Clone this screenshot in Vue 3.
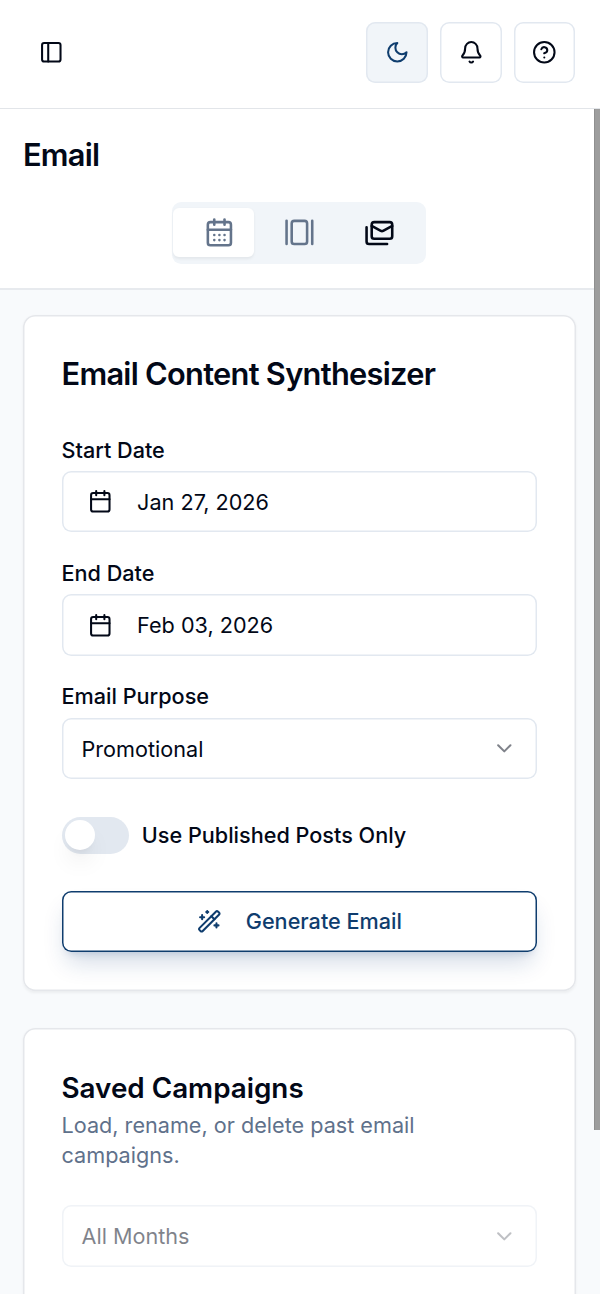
<template>
  <div class="app">
    <header class="topbar">
      <button class="sidebar-toggle" aria-label="Toggle sidebar">
        <svg class="icon" viewBox="0 0 24 24">
          <rect width="18" height="18" x="3" y="3" rx="2" />
          <path d="M9 3v18" />
        </svg>
      </button>
      <div class="actions">
        <button class="action active" aria-label="Toggle theme">
          <svg class="icon" viewBox="0 0 24 24">
            <path d="M12 3a6 6 0 0 0 9 9 9 9 0 1 1-9-9Z" />
          </svg>
        </button>
        <button class="action" aria-label="Notifications">
          <svg class="icon" viewBox="0 0 24 24">
            <path d="M10.268 21a2 2 0 0 0 3.464 0" />
            <path d="M3.262 15.326A1 1 0 0 0 4 17h16a1 1 0 0 0 .74-1.673C19.41 13.956 18 12.499 18 8A6 6 0 0 0 6 8c0 4.499-1.411 5.956-2.738 7.326" />
          </svg>
        </button>
        <button class="action" aria-label="Help">
          <svg class="icon" viewBox="0 0 24 24">
            <circle cx="12" cy="12" r="10" />
            <path d="M9.09 9a3 3 0 0 1 5.83 1c0 2-3 3-3 3M12 17h.01" />
          </svg>
        </button>
      </div>
    </header>

    <section class="page-header">
      <h1>Email</h1>
      <div class="tabs">
        <button
            v-for="tab in tabs"
            :key="tab.id"
            class="tab"
            :class="{ selected: tab.id === view, dark: tab.id === 'email' }"
            :aria-label="tab.id"
            @click="view = tab.id"
        >
          <svg class="icon" viewBox="0 0 24 24">
            <path v-for="d in tab.paths" :key="d" :d="d" />
            <rect v-bind="tab.rect" rx="2" />
          </svg>
        </button>
      </div>
    </section>

    <main class="content">
      <section class="card">
        <h2>Email Content Synthesizer</h2>
        <div v-for="date in dates" :key="date.label" class="field">
          <label>{{ date.label }}</label>
          <button class="control date">
            <svg class="icon" viewBox="0 0 24 24">
              <path d="M8 2v4M16 2v4M3 10h18" />
              <rect width="18" height="18" x="3" y="4" rx="2" />
            </svg>
            <span>{{ date.value }}</span>
          </button>
        </div>
        <div class="field">
          <label>Email Purpose</label>
          <button class="control select">
            <span>Promotional</span>
            <svg class="icon chevron" viewBox="0 0 24 24"><path d="m6 9 6 6 6-6" /></svg>
          </button>
        </div>
        <div class="switch-row">
          <button
              class="switch"
              :class="{ on: publishedOnly }"
              role="switch"
              :aria-checked="publishedOnly"
              @click="publishedOnly = !publishedOnly"
          >
            <span class="knob"></span>
          </button>
          <label>Use Published Posts Only</label>
        </div>
        <button class="control generate">
          <svg class="icon" viewBox="0 0 24 24">
            <path d="m21.64 3.64-1.28-1.28a1.21 1.21 0 0 0-1.72 0L2.36 18.64a1.21 1.21 0 0 0 0 1.72l1.28 1.28a1.2 1.2 0 0 0 1.72 0L21.64 5.36a1.2 1.2 0 0 0 0-1.72" />
            <path d="m14 7 3 3M5 6v4M19 14v4M10 2v2M7 8H3M21 16h-4M11 3H9" />
          </svg>
          <span>Generate Email</span>
        </button>
      </section>

      <section class="card campaigns">
        <h3>Saved Campaigns</h3>
        <p>Load, rename, or delete past email campaigns.</p>
        <button class="control select" disabled>
          <span>All Months</span>
          <svg class="icon chevron" viewBox="0 0 24 24"><path d="m6 9 6 6 6-6" /></svg>
        </button>
      </section>
    </main>
    <div class="scrollbar"></div>
  </div>
</template>

<script setup>
import { ref } from 'vue'

const view = ref('calendar')
const publishedOnly = ref(false)

const tabs = [
  {
    id: 'calendar',
    rect: { width: 18, height: 18, x: 3, y: 4 },
    paths: ['M8 2v4', 'M16 2v4', 'M3 10h18', 'M8 14h.01', 'M12 14h.01', 'M16 14h.01', 'M8 18h.01', 'M12 18h.01', 'M16 18h.01']
  },
  {
    id: 'gallery',
    rect: { width: 12, height: 18, x: 6, y: 3 },
    paths: ['M2 3v18', 'M22 3v18']
  },
  {
    id: 'email',
    rect: { width: 16, height: 13, x: 6, y: 4 },
    paths: ['m22 7-7.1 3.78c-.57.3-1.23.3-1.8 0L6 7', 'M2 8v11c0 1.1.9 2 2 2h14']
  }
]

const dates = [
  { label: 'Start Date', value: 'Jan 27, 2026' },
  { label: 'End Date', value: 'Feb 03, 2026' }
]
</script>

<style>
body {
  margin: 0;
}
</style>

<style scoped>
.app {
  position: relative;
  height: 1294px;
  overflow: hidden;
  background-color: #f8fafc;
  color: #020817;
  font-family: Inter, "Liberation Sans", sans-serif;
  font-size: 21.63px;
}
.app * {
  box-sizing: border-box;
}
button {
  margin: 0;
  padding: 0;
  border: none;
  background: none;
  color: inherit;
  font: inherit;
}
h1, h2, h3, p {
  margin: 0;
}
.icon {
  display: block;
  flex: none;
  width: 24.6px;
  height: 24.6px;
  fill: none;
  stroke: currentColor;
  stroke-width: 2;
  stroke-linecap: round;
  stroke-linejoin: round;
}

/* Top bar */
.topbar {
  display: flex;
  justify-content: space-between;
  align-items: center;
  height: 109px;
  padding: 0 24.6px 3.4px 38.6px;
  border-bottom: 1px solid #e2e5e9;
  background-color: white;
}
.actions {
  display: flex;
  gap: 12.3px;
}
.action {
  display: flex;
  align-items: center;
  justify-content: center;
  width: 61.5px;
  height: 61.5px;
  border-radius: 9.2px;
  box-shadow: inset 0 0 0 1.5px #e2e8f0;
}
.action.active {
  background-color: #f1f5f9;
  color: #0f3d6e;
}

/* Title and view tabs */
.page-header {
  display: flex;
  flex-direction: column;
  height: 181px;
  padding: 27px 23px 0;
  border-bottom: 2px solid #e7eaee;
  background-color: white;
}
h1, h2 {
  font-size: 30.77px;
  font-weight: 600;
  line-height: 38px;
  letter-spacing: -0.025em;
}
h1 {
  height: 38px;
}
.tabs {
  display: flex;
  align-items: center;
  align-self: center;
  height: 61.5px;
  margin: 28px 2px 0 0;
  padding: 0 11.6px 0 1.2px;
  border-radius: 9.2px;
  background-color: #f1f5f9;
}
.tab {
  padding: 9.2px 19.2px 9.2px 30.3px;
  border-radius: 6px;
  color: #64748b;
}
.tab .icon {
  width: 30.8px;
  height: 30.8px;
}
.tab.selected {
  background-color: white;
  box-shadow: 0 1.5px 3px rgba(0, 0, 0, 0.06);
}
.tab.dark {
  color: #020817;
}

/* Cards */
.content {
  display: flex;
  flex-direction: column;
  gap: 37.6px;
  padding: 25px 24px 0 23px;
}
.card {
  display: flex;
  flex-direction: column;
  height: 675.5px;
  padding: 40px 39px 0 38.5px;
  border-radius: 12.3px;
  background-color: white;
  box-shadow: inset 0 0 0 1.5px #e5e7eb, 0 1.5px 3px rgba(0, 0, 0, 0.05);
}
h2 {
  margin-bottom: 45.6px;
  letter-spacing: -0.023em;
}
label {
  font-weight: 500;
  line-height: 22px;
}
.field {
  display: flex;
  flex-direction: column;
  gap: 10.4px;
  margin-bottom: 29.5px;
}
.control {
  display: flex;
  align-items: center;
  width: 100%;
  height: 61.5px;
  flex: none;
  border-radius: 9.2px;
  box-shadow: inset 0 0 0 1.5px #e2e8f0;
  background-color: white;
}
.date {
  gap: 25px;
  padding: 0 26px;
}
.select {
  justify-content: space-between;
  padding: 0 20px;
}
.select:disabled {
  opacity: 0.5;
}
.chevron {
  opacity: 0.5;
}

/* Published posts toggle */
.switch-row {
  display: flex;
  align-items: center;
  gap: 12.6px;
  margin: 7.8px 0 37px;
}
.switch {
  width: 67.7px;
  height: 37px;
  padding: 3px;
  border-radius: 19px;
  background-color: #e2e8f0;
}
.switch.on {
  background-color: #0f3d6e;
}
.knob {
  display: block;
  width: 30.8px;
  height: 30.8px;
  border-radius: 50%;
  background-color: white;
  box-shadow: 0 15px 23px -5px rgba(0, 0, 0, 0.1), 0 6px 9px -6px rgba(0, 0, 0, 0.1);
}
.switch.on .knob {
  transform: translateX(30.8px);
}

.generate {
  justify-content: center;
  gap: 24.6px;
  color: #0f3d6e;
  font-weight: 500;
  box-shadow: inset 0 0 0 1.5px #0f3d6e, 0 15px 23px -5px rgba(15, 61, 120, 0.19), 0 6px 9px -6px rgba(15, 61, 120, 0.22);
}

/* Saved campaigns */
.campaigns {
  padding-top: 42.5px;
}
h3 {
  font-size: 27.8px;
  font-weight: 600;
  line-height: 34px;
}
p {
  max-width: 440px;
  margin: 5px 0 34px;
  color: #5f718b;
  line-height: 30.77px;
}

.scrollbar {
  position: absolute;
  top: 109px;
  right: 0;
  width: 6px;
  height: 1021px;
  border-left: 1px solid #8f8f8f;
  background-color: #9d9d9d;
}
</style>
